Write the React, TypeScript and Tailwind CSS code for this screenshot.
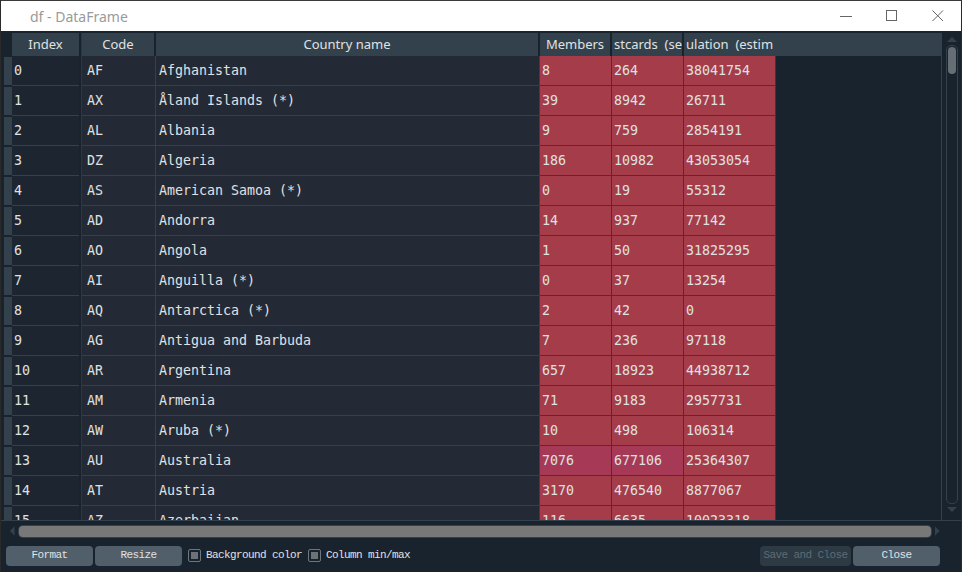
import React from 'react';

type Row = [string, string, string, string, string, string];

const rows: Row[] = [
  ['0', 'AF', 'Afghanistan', '8', '264', '38041754'],
  ['1', 'AX', 'Åland Islands (*)', '39', '8942', '26711'],
  ['2', 'AL', 'Albania', '9', '759', '2854191'],
  ['3', 'DZ', 'Algeria', '186', '10982', '43053054'],
  ['4', 'AS', 'American Samoa (*)', '0', '19', '55312'],
  ['5', 'AD', 'Andorra', '14', '937', '77142'],
  ['6', 'AO', 'Angola', '1', '50', '31825295'],
  ['7', 'AI', 'Anguilla (*)', '0', '37', '13254'],
  ['8', 'AQ', 'Antarctica (*)', '2', '42', '0'],
  ['9', 'AG', 'Antigua and Barbuda', '7', '236', '97118'],
  ['10', 'AR', 'Argentina', '657', '18923', '44938712'],
  ['11', 'AM', 'Armenia', '71', '9183', '2957731'],
  ['12', 'AW', 'Aruba (*)', '10', '498', '106314'],
  ['13', 'AU', 'Australia', '7076', '677106', '25364307'],
  ['14', 'AT', 'Austria', '3170', '476540', '8877067'],
  ['15', 'AZ', 'Azerbaijan', '116', '6635', '10023318'],
];

const mono = "font-['DejaVu_Sans_Mono',monospace] text-[13.3px]";
const sans = "font-['Noto_Sans',sans-serif] text-[13px]";
const btnFont = "font-['Liberation_Mono',monospace] text-[11px] tracking-[-0.6px]";

const App: React.FC = () => {
  return (
    <div className="w-[962px] h-[572px] bg-[#19232d] flex flex-col border-x border-[#2a2a2a] overflow-hidden text-[#e0e1e3]">
      {/* Title bar */}
      <div className="h-[31px] bg-white border-t border-[#3a3a3a] flex items-center shrink-0">
        <span className="ml-[29px] font-['Noto_Sans',sans-serif] text-[14px] text-[#9a9a9a]">df - DataFrame</span>
        <div className="ml-auto flex items-center h-full">
          <div className="w-[46px] h-full flex items-center justify-center">
            <svg width="12" height="12" viewBox="0 0 12 12"><path d="M0 6.5h12" stroke="#666" strokeWidth="1" /></svg>
          </div>
          <div className="w-[46px] h-full flex items-center justify-center">
            <svg width="12" height="12" viewBox="0 0 12 12"><rect x="0.5" y="0.5" width="10" height="10" fill="none" stroke="#666" /></svg>
          </div>
          <div className="w-[46px] h-full flex items-center justify-center">
            <svg width="12" height="12" viewBox="0 0 12 12"><path d="M0.5 0.5l10.5 10.5M11 0.5L0.5 11" stroke="#666" /></svg>
          </div>
        </div>
      </div>

      {/* Tables */}
      <div className="h-[489px] flex pt-[2px] pl-[3px] shrink-0">
        {/* Index table */}
        <div className="w-[75px] flex flex-col overflow-hidden">
          <div className="h-[23px] flex shrink-0">
            <div className="w-[8px] bg-[#19232d]" />
            <div className={`w-[67px] bg-[#32414b] flex items-center justify-center ${sans}`}>Index</div>
          </div>
          {rows.map((r) => (
            <div key={r[0]} className="h-[30px] flex shrink-0">
              <div className="w-[8px] py-[1px]"><div className="h-full bg-[#32414b]" /></div>
              <div className={`w-[67px] bg-[#1d2630] border-b border-[#32414b] flex items-center pl-[2px] ${mono}`}>{r[0]}</div>
            </div>
          ))}
        </div>

        {/* Data table */}
        <div className="ml-[2px] w-[861px] flex flex-col overflow-hidden border-l border-[#2c3742] border-r border-r-[#32414b]">
          <div className="h-[23px] flex shrink-0 bg-[#32414b]">
            <div className={`w-[74px] border-r-2 border-[#19232d] flex items-center justify-center ${sans}`}>Code</div>
            <div className={`w-[384px] border-r-2 border-[#19232d] flex items-center justify-center ${sans}`}>Country name</div>
            <div className={`w-[72px] border-r-2 border-[#19232d] flex items-center justify-center ${sans}`}>Members</div>
            <div className={`w-[72px] border-r-2 border-[#19232d] flex items-center pl-[2px] whitespace-pre overflow-hidden ${sans}`}>stcards  (se</div>
            <div className={`w-[92px] flex items-center pl-[2px] whitespace-pre overflow-hidden ${sans}`}>ulation  (estim</div>
          </div>
          {rows.map((r) => {
            const hi = r[0] === '13';
            return (
              <div key={r[0]} className={`h-[30px] flex shrink-0 ${mono}`}>
                <div className="w-[74px] bg-[#232a35] border-r border-b border-[#32414b] flex items-center pl-[5px]">{r[1]}</div>
                <div className="w-[384px] bg-[#232a35] border-r border-b border-[#32414b] flex items-center pl-[3px] whitespace-pre">{r[2]}</div>
                <div className={`w-[72px] ${hi ? 'bg-[#a63a56]' : 'bg-[#a43c49]'} border-r border-b border-[#3d3540] flex items-center pl-[2px]`}>{r[3]}</div>
                <div className={`w-[72px] ${hi ? 'bg-[#a63a56]' : 'bg-[#a43c49]'} border-r border-b border-[#3d3540] flex items-center pl-[2px]`}>{r[4]}</div>
                <div className="w-[92px] bg-[#a43c49] border-r border-b border-[#3d3540] flex items-center pl-[2px]">{r[5]}</div>
              </div>
            );
          })}
        </div>

        {/* Vertical scrollbar */}
        <div className="ml-[3px] w-[14px] flex flex-col items-center pt-[2px]">
          <svg width="12" height="8" viewBox="0 0 12 8"><path d="M1 7L6 2l5 5z" fill="#32414b" /></svg>
          <div className="mt-[2px] w-[12px] flex-1 border border-[#32414b] rounded-[5px] p-[1px] mb-[2px]">
            <div className="h-[27px] bg-[#656d75] rounded-[4px]" />
          </div>
          <svg width="12" height="8" viewBox="0 0 12 8"><path d="M1 1l5 5 5-5z" fill="#32414b" /></svg>
          <div className="h-[6px]" />
        </div>
      </div>

      {/* Horizontal scrollbar */}
      <div className="h-[21px] flex items-center pl-[7px] pr-[20px] border-t border-[#32414b] shrink-0">
        <svg width="8" height="12" viewBox="0 0 8 12"><path d="M7 1L2 6l5 5z" fill="#32414b" /></svg>
        <div className="ml-[2px] flex-1 h-[13px] bg-[#32414b] rounded-[5px] p-[1px]">
          <div className="h-full w-[912px] bg-[#787878] rounded-[4px]" />
        </div>
        <svg className="ml-[2px]" width="8" height="12" viewBox="0 0 8 12"><path d="M1 1l5 5-5 5z" fill="#32414b" /></svg>
      </div>

      {/* Buttons */}
      <div className="h-[25px] mt-[2px] flex items-center pl-[5px] pr-[21px] gap-[2px] shrink-0">
        <div className={`w-[87px] h-[20px] bg-[#505f69] rounded-[4px] flex items-center justify-center ${btnFont}`}>Format</div>
        <div className={`w-[87px] h-[20px] bg-[#505f69] rounded-[4px] flex items-center justify-center ${btnFont}`}>Resize</div>
        <div className="ml-[4px] flex items-center gap-[5px]">
          <div className="w-[13px] h-[13px] border border-[#6b7780] rounded-[2px] p-[2px]"><div className="w-full h-full bg-[#6b7378]" /></div>
          <span className={btnFont}>Background color</span>
        </div>
        <div className="ml-[4px] flex items-center gap-[5px]">
          <div className="w-[13px] h-[13px] border border-[#6b7780] rounded-[2px] p-[2px]"><div className="w-full h-full bg-[#6b7378]" /></div>
          <span className={btnFont}>Column min/max</span>
        </div>
        <div className={`ml-auto w-[91px] h-[20px] bg-[#2d3a44] rounded-[4px] flex items-center justify-center text-[#5f6b75] ${btnFont}`}>Save and Close</div>
        <div className={`w-[87px] h-[20px] bg-[#505f69] rounded-[4px] flex items-center justify-center ${btnFont}`}>Close</div>
      </div>
    </div>
  );
};

export default App;
